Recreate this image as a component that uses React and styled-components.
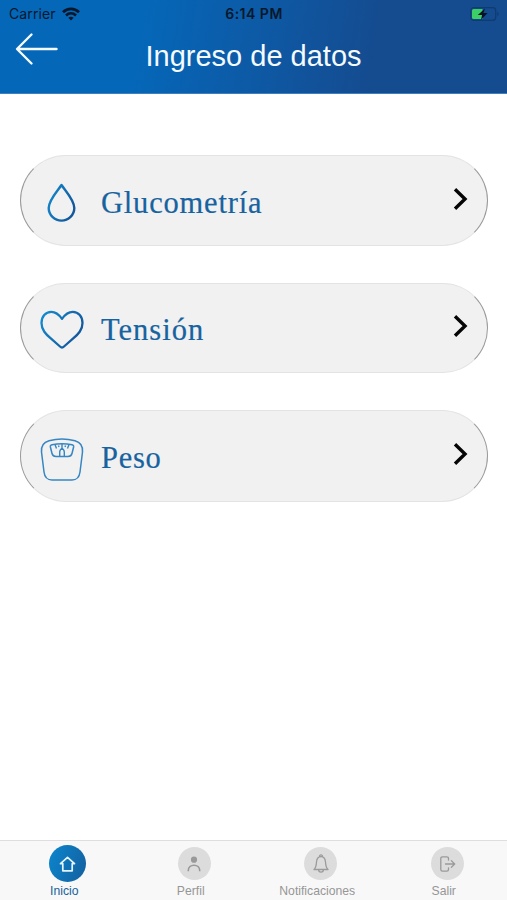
import React from "react";
import styled, { createGlobalStyle } from "styled-components";

const GlobalStyle = createGlobalStyle`
  * { box-sizing: border-box; }
  body { margin: 0; background: #fff; }
  svg { display: block; flex: none; overflow: visible; }
`;

const Screen = styled.div`
  width: 507px;
  height: 900px;
  display: flex;
  flex-direction: column;
  overflow: hidden;
  background: #fff;
  font-family: "Liberation Sans", Arial, sans-serif;
`;

const Header = styled.header`
  height: 94px;
  flex: none;
  display: flex;
  flex-direction: column;
  background: linear-gradient(100deg, #0567b8 0%, #0567b8 28%, #0d5aa6 50%, #154b8f 74%, #154b8f 100%);
  border-bottom: 1px solid #3d7fc0;
`;

const StatusBar = styled.div`
  height: 27px;
  padding: 0 8px 0 9px;
  display: grid;
  grid-template-columns: 1fr auto 1fr;
  align-items: center;
  font-family: Inter, sans-serif;
  color: #07182c;
`;

const Carrier = styled.div`
  display: flex;
  align-items: center;
  gap: 6px;
  font-size: 14px;
  letter-spacing: 0.1px;
`;

const Clock = styled.div`
  font-size: 14px;
  font-weight: 600;
  letter-spacing: 0.5px;
`;

const BatterySlot = styled.div`
  display: flex;
  justify-content: flex-end;
`;

const TitleBar = styled.div`
  display: grid;
  grid-template-columns: 60px 1fr 60px;
  height: 60px;
`;

const BackButton = styled.button`
  display: flex;
  align-items: flex-start;
  padding: 6px 0 0 15px;
  border: 0;
  background: none;
`;

const Title = styled.h1`
  margin: 0;
  padding-top: 13px;
  text-align: center;
  font-size: 29px;
  line-height: 33px;
  font-weight: 400;
  white-space: nowrap;
  color: #f4faff;
`;

const Options = styled.main`
  flex: 1;
  display: flex;
  flex-direction: column;
  gap: 37px;
  padding: 61px 19px 0 20px;
`;

const OptionCard = styled.button`
  display: flex;
  align-items: center;
  width: 100%;
  height: ${(p) => p.$height}px;
  padding: 0 19px;
  border: 1px solid;
  border-color: #e3e3e3 #999;
  border-radius: 46px;
  background: #f1f1f1;
`;

const IconSlot = styled.span`
  display: flex;
  width: 44px;
  margin-right: 17px;
  padding-top: ${(p) => p.$drop}px;
`;

const OptionLabel = styled.span`
  flex: 1;
  padding-top: 4px;
  text-align: left;
  font-family: Georgia, "Liberation Serif", serif;
  font-size: 30.5px;
  line-height: 36px;
  letter-spacing: ${(p) => p.$tracking}px;
  color: #17639f;
  -webkit-text-stroke: 0.2px #17639f;
`;

const ChevronSlot = styled.span`
  display: flex;
  padding-bottom: 4px;
`;

const TabBar = styled.nav`
  height: 60px;
  display: grid;
  grid-template-columns: repeat(4, 126.5px);
  padding-left: 1px;
  background: #f8f8f8;
  border-top: 1px solid #dedede;
`;

const Tab = styled.a`
  display: flex;
  flex-direction: column;
  align-items: center;
  padding-top: 4px;
`;

const TabDisc = styled.span`
  display: flex;
  align-items: center;
  justify-content: center;
  width: ${(p) => (p.$active ? 37 : 33)}px;
  height: ${(p) => (p.$active ? 37 : 33)}px;
  margin: ${(p) => (p.$active ? "0" : "2px 0")};
  margin-left: 7px;
  border-radius: 50%;
  background: ${(p) => (p.$active ? "linear-gradient(110deg, #0b86ce, #145f9e)" : "#dcdcdc")};
`;

const TabLabel = styled.span`
  margin-top: 2px;
  font-size: 12.2px;
  line-height: 14px;
  color: ${(p) => (p.$active ? "#17639b" : "#969696")};
`;

function WifiIcon() {
  return (
    <svg width="18" height="14" viewBox="0 0 18 14" fill="none" stroke="#07182c" strokeWidth="2.7">
      <path d="M1 5.2C5.5.7 12.5.7 17 5.2M4 8.4c2.9-2.7 7.1-2.7 10 0" />
      <path d="M6.3 10.7c1.6-1.4 3.8-1.4 5.4 0L9 13.5z" fill="#07182c" stroke="none" />
    </svg>
  );
}

function BatteryIcon() {
  return (
    <svg width="29" height="14" viewBox="0 0 29 14">
      <rect x=".7" y=".7" width="25" height="12.6" rx="3" fill="none" stroke="#103b70" strokeWidth="1.2" />
      <path d="M3.5 2h9v10h-9Q2 12 2 10.5v-7Q2 2 3.5 2z" fill="#3bcf65" />
      <path d="M27.2 5v4q1.5-.7 1.5-2t-1.5-2z" fill="#103b70" />
      <path d="M15 1.5 7.8 8h4.3L11 12.8 17.6 6h-4.2z" fill="#051225" />
    </svg>
  );
}

function BackArrow() {
  return (
    <svg width="43" height="32" viewBox="0 0 43 32" fill="none" stroke="#f4faff" strokeWidth="2.4" strokeLinecap="round" strokeLinejoin="round">
      <path d="M16.5 1.5 2 16l14.5 14.5M2.5 16H41.5" />
    </svg>
  );
}

function IconGradient({ id }) {
  return (
    <linearGradient id={id} x1="0" y1="0" x2="1" y2=".5">
      <stop offset="0" stopColor="#128dcf" />
      <stop offset="1" stopColor="#14589c" />
    </linearGradient>
  );
}

function DropIcon() {
  return (
    <svg width="44" height="44" viewBox="0 0 44 44" fill="none" stroke="url(#drop)" strokeWidth="2.4" strokeLinejoin="round">
      <defs><IconGradient id="drop" /></defs>
      <path d="M21.5 5C17.5 11 8.7 20 8.7 28a12.8 12.6 0 0 0 25.6 0C34.3 20 25.5 11 21.5 5z" />
    </svg>
  );
}

function HeartIcon() {
  return (
    <svg width="44" height="44" viewBox="0 0 44 44" fill="none" stroke="url(#heart)" strokeWidth="2.3" strokeLinejoin="round">
      <defs><IconGradient id="heart" /></defs>
      <path d="M22 11.8C18.5 6.8 15 4.8 11.3 4.8 5.5 4.8 1.5 9.5 1.5 16c0 7 4.5 11.2 9 15.2L20 39.5q2 1.9 4 0l9.5-8.3c4.5-4 9-8.2 9-15.2 0-6.5-4-11.2-9.8-11.2C29 4.8 25.5 6.8 22 11.8z" />
    </svg>
  );
}

function ScaleIcon() {
  return (
    <svg width="44" height="44" viewBox="0 0 44 44" fill="none" stroke="#3586c3" strokeWidth="1.5" strokeLinejoin="round">
      <path d="M9 2.7Q22-.7 35 2.700C40.5 4.2 43 8 42.5 14L40 34q-1 8-8 8H12q-7 0-8-8L1.5 14C1 8 3.5 4.2 9 2.700z" />
      <path d="M12 6.700q10-1.700 20 0 2 .4 1.600 2.300L32 15.500Q31.200 18.500 28 18.500H16Q12.800 18.500 12 15.500L10.400 9Q10 7.100 12 6.700z" />
      <path d="M15 6.500l1.500 4M22 6v4.500M29 6.500l-1.500 4M18.500 7.500l.5 1.500M25.500 7.500 25 9M19.700 18V14q0-2 2.300-4 2.300 2 2.300 4v4" strokeWidth="1.400" />
    </svg>
  );
}

function Chevron() {
  return (
    <svg width="15" height="22" viewBox="0 0 15 22" fill="none" stroke="#050505" strokeWidth="3.400">
      <path d="M2 1.300 12 11 2 20.700" />
    </svg>
  );
}

function HomeIcon() {
  return (
    <svg width="18" height="18" viewBox="0 0 18 18" fill="none" stroke="#e3f4fc" strokeWidth="1.700" strokeLinejoin="round" strokeLinecap="round">
      <path d="M1.500 8.700 8.500 2.300l7 6.400h-2.300v7.100H3.800V8.700z" />
    </svg>
  );
}

function PersonIcon() {
  return (
    <svg width="16" height="18" viewBox="0 0 16 18" fill="none" stroke="#999" strokeWidth="1.600">
      <circle cx="8" cy="4.700" r="3.100" fill="#999" stroke="none" />
      <path d="M2.300 16.300v-.8c0-3.300 2.500-5.300 5.700-5.300s5.700 2 5.700 5.300v.8" />
    </svg>
  );
}

function BellIcon() {
  return (
    <svg width="16" height="20" viewBox="0 0 16 20" fill="none" stroke="#9b9b9b" strokeWidth="1.300" strokeLinejoin="round">
      <path d="M8 2.700C4.800 2.700 3.700 5.500 3.500 8c-.2 3.500-.7 6-2.500 7.500h14c-1.800-1.500-2.300-4-2.500-7.500-.2-2.500-1.300-5.300-4.500-5.300zM6.500 2.800C6 .2 10 .2 9.500 2.800M5.500 15.500c.2 3.500 4.800 3.500 5 0" />
    </svg>
  );
}

function ExitIcon() {
  return (
    <svg width="18" height="18" viewBox="0 0 18 18" fill="none" stroke="#999" strokeWidth="1.300" strokeLinejoin="round" strokeLinecap="round">
      <path d="M10.500 5V3.500Q10.500 1.900 8.700 1.900H4.500Q2.800 1.900 2.800 3.500v11q0 1.600 1.700 1.600h4.200q1.800 0 1.800-1.600V13M7.500 9h9M13.300 5.600 16.700 9l-3.400 3.400" />
    </svg>
  );
}

const options = [
  { label: "Glucometría", Icon: DropIcon, height: 91, tracking: 0.8, drop: 2 },
  { label: "Tensión", Icon: HeartIcon, height: 90, tracking: 1, drop: 2 },
  { label: "Peso", Icon: ScaleIcon, height: 92, tracking: 0.7, drop: 7 },
];

const tabs = [
  { label: "Inicio", Icon: HomeIcon, active: true },
  { label: "Perfil", Icon: PersonIcon },
  { label: "Notificaciones", Icon: BellIcon },
  { label: "Salir", Icon: ExitIcon },
];

export default function App() {
  return (
    <Screen>
      <GlobalStyle />
      <Header>
        <StatusBar>
          <Carrier>Carrier <WifiIcon /></Carrier>
          <Clock>6:14 PM</Clock>
          <BatterySlot><BatteryIcon /></BatterySlot>
        </StatusBar>
        <TitleBar>
          <BackButton aria-label="Volver"><BackArrow /></BackButton>
          <Title>Ingreso de datos</Title>
        </TitleBar>
      </Header>
      <Options>
        {options.map(({ label, Icon, height, tracking, drop }) => (
          <OptionCard key={label} $height={height}>
            <IconSlot $drop={drop}><Icon /></IconSlot>
            <OptionLabel $tracking={tracking}>{label}</OptionLabel>
            <ChevronSlot><Chevron /></ChevronSlot>
          </OptionCard>
        ))}
      </Options>
      <TabBar>
        {tabs.map(({ label, Icon, active }) => (
          <Tab key={label}>
            <TabDisc $active={active}><Icon /></TabDisc>
            <TabLabel $active={active}>{label}</TabLabel>
          </Tab>
        ))}
      </TabBar>
    </Screen>
  );
}
